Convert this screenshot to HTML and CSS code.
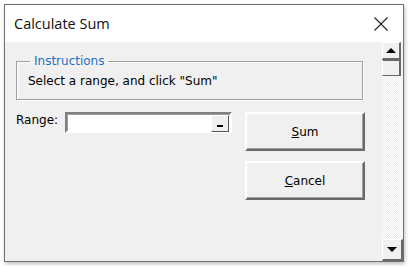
FILE: index.html
```html
<!DOCTYPE html>
<html lang="en">
<head>
    <meta charset="UTF-8">
    <title>Calculate Sum</title>
    <link rel="stylesheet" href="styles.css">
</head>
<body>
    <div class="window">
        <div class="titlebar">
            <span class="title">Calculate Sum</span>
            <svg class="close" width="14" height="14" viewBox="0 0 14 14">
                <path d="M0.5 0.5 L13.5 13.5 M13.5 0.5 L0.5 13.5" stroke="#222" stroke-width="1.1" fill="none"/>
            </svg>
        </div>
        <div class="client">
            <div class="form">
                <fieldset class="group">
                    <legend>Instructions</legend>
                    <p>Select a range, and click "Sum"</p>
                </fieldset>
                <div class="row">
                    <div class="field">
                        <label>Range:</label>
                        <div class="refedit">
                            <span class="pick"><i></i></span>
                        </div>
                    </div>
                    <div class="buttons">
                        <button class="btn"><u>S</u>um</button>
                        <button class="btn"><u>C</u>ancel</button>
                    </div>
                </div>
            </div>
            <div class="scrollbar">
                <div class="arrow up"><span></span></div>
                <div class="thumb"></div>
                <div class="track"></div>
                <div class="arrow down"><span></span></div>
            </div>
        </div>
    </div>
</body>
</html>
```

FILE: styles.css
```css
:root {
    --face: #f0f0f0;
    --dark: #696969;
    --shadow: #a0a0a0;
    --text: #000;
    --legend: #1a6fc4;
}

* {
    box-sizing: border-box;
    margin: 0;
    padding: 0;
}

body {
    background: #fff;
    font-family: Tahoma, "DejaVu Sans", sans-serif;
    font-size: 12px;
    color: var(--text);
    padding: 4px;
}

.window {
    width: 400px;
    height: 258px;
    border: 1px solid #707070;
    background: var(--face);
    display: flex;
    flex-direction: column;
    box-shadow: 1px 2px 4px rgba(0, 0, 0, 0.25);
}

.titlebar {
    height: 37px;
    background: #fff;
    display: flex;
    align-items: center;
    justify-content: space-between;
    padding: 0 15px 0 9px;
}

.title {
    font-family: "Open Sans", sans-serif;
    font-size: 14.5px;
    color: #111;
}

.client {
    flex: 1;
    display: flex;
}

.form {
    flex: 1;
    min-width: 0;
    padding: 12px 0 0 11px;
}

.group {
    width: 347px;
    border: 1px solid var(--shadow);
    box-shadow: 1px 1px 0 #fff, inset 1px 1px 0 #fff;
    padding: 5px 11px 11px;
}

.group legend {
    color: var(--legend);
    padding: 0 4px;
    margin-left: 2px;
    font-size: 12px;
    line-height: 15px;
}

.group p {
    line-height: 14px;
}

.row {
    display: flex;
    margin-top: 12px;
}

.field {
    display: flex;
    align-items: flex-start;
    gap: 9px;
    width: 229px;
}

.field label {
    margin-top: 1px;
    width: 40px;
}

.refedit {
    width: 167px;
    height: 21px;
    background: #fff;
    border: 2px solid;
    border-color: #808080 #fff #fff #808080;
    box-shadow: inset 1px 1px 0 #a0a0a0;
    display: flex;
    justify-content: flex-end;
    padding: 1px 1px 0 0;
}

.pick {
    width: 18px;
    height: 17px;
    background: var(--face);
    border: 1px solid;
    border-color: #fff #555 #555 #fff;
    display: flex;
    justify-content: center;
    align-items: flex-end;
    padding-bottom: 4px;
}

.pick i {
    width: 6px;
    height: 2px;
    background: #000;
}

.buttons {
    display: flex;
    flex-direction: column;
    gap: 10px;
}

.btn {
    width: 120px;
    height: 39px;
    background: var(--face);
    border: 2px solid;
    border-color: #fff #696969 #696969 #fff;
    box-shadow: inset -1px -1px 0 #a0a0a0;
    font-family: Tahoma, "DejaVu Sans", sans-serif;
    font-size: 12px;
    color: var(--text);
}

.scrollbar {
    width: 21px;
    display: flex;
    flex-direction: column;
    background-color: #fff;
    background-image:
        linear-gradient(45deg, #ececec 25%, transparent 25%, transparent 75%, #ececec 75%),
        linear-gradient(45deg, #ececec 25%, transparent 25%, transparent 75%, #ececec 75%);
    background-size: 2px 2px;
    background-position: 0 0, 1px 1px;
}

.arrow {
    width: 19px;
    height: 17px;
    background: var(--face);
    border: 1px solid;
    border-color: #fff var(--dark) var(--dark) #fff;
    border-right-width: 2px;
    display: flex;
    align-items: center;
    justify-content: center;
}

.arrow.down {
    width: 21px;
    height: 22px;
    border-bottom-width: 2px;
}

.arrow span {
    width: 0;
    height: 0;
    border-left: 5px solid transparent;
    border-right: 5px solid transparent;
}

.arrow.up span {
    border-bottom: 5px solid #000;
}

.arrow.down span {
    border-top: 5px solid #000;
}

.thumb {
    width: 19px;
    height: 17px;
    background: var(--face);
    border: 1px solid;
    border-color: #fff var(--dark) var(--dark) #fff;
    border-top: 2px solid var(--dark);
    border-right-width: 2px;
}

.track {
    flex: 1;
}
```
